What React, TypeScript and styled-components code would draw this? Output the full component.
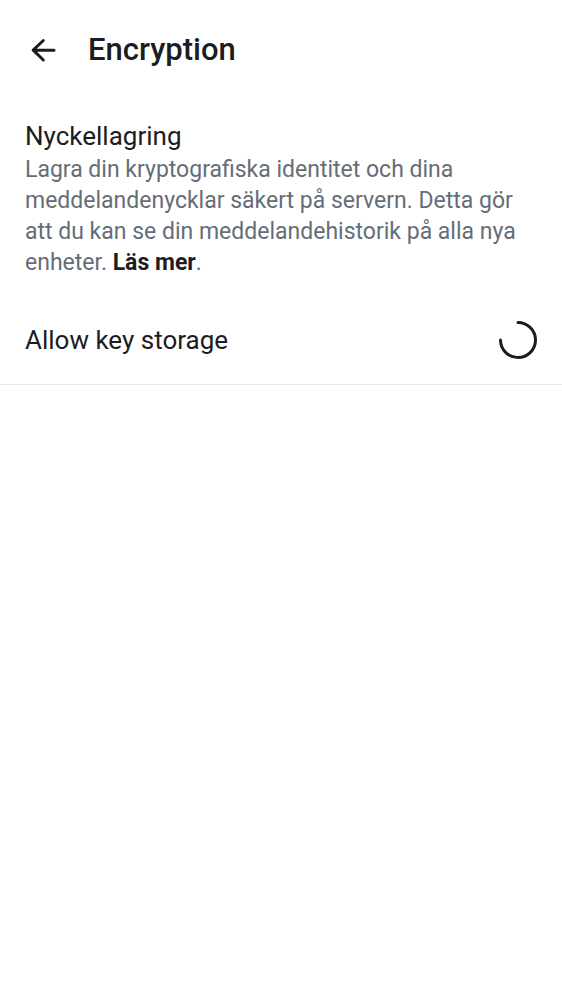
import React from "react";
import styled, { createGlobalStyle } from "styled-components";

const GlobalStyle = createGlobalStyle`
  * { box-sizing: border-box; }
  body { margin: 0; background: #fff; font-family: Roboto, "Noto Sans", sans-serif; color: #1b1d22; }
`;
const Header = styled.header`
  display: flex;
  align-items: center;
  gap: 26px;
  padding: 30px 25px;
`;
const BackButton = styled.button`
  display: flex;
  padding: 0;
  border: 0;
  background: none;
  color: inherit;
  cursor: pointer;
`;
const Title = styled.h1`
  margin: 0;
  font-size: 31px;
  line-height: 40px;
  font-weight: 500;
`;
const Section = styled.section`
  padding: 19px 25px 20px;
`;
const SectionTitle = styled.h2`
  margin: 0;
  font-size: 26px;
  line-height: 34px;
  font-weight: 400;
`;
const Description = styled.p`
  margin: 0;
  padding-top: 1px;
  font-size: 23px;
  line-height: 31px;
  color: #656d77;
`;
const Link = styled.a`
  font-weight: 700;
  color: #1b1d22;
  text-decoration: none;
`;
const Row = styled.div`
  display: flex;
  align-items: center;
  justify-content: space-between;
  padding: 23px 25px 25px;
  border-bottom: 1px solid #e6e8ee;
`;
const RowLabel = styled.span`
  font-size: 26px;
  line-height: 34px;
`;

export default function App() {
  return (
    <>
      <GlobalStyle />
      <Header>
        <BackButton type="button" aria-label="Tillbaka">
          <svg width="37" height="37" viewBox="0 0 37 37" fill="none" stroke="currentColor" strokeWidth="3" strokeLinecap="round" strokeLinejoin="round">
            <path d="M18.3 8.5L8.2 18.2L18.3 28M8.2 18.2H29" />
          </svg>
        </BackButton>
        <Title>Encryption</Title>
      </Header>
      <main>
        <Section>
          <SectionTitle>Nyckellagring</SectionTitle>
          <Description>
            Lagra din kryptografiska identitet och dina meddelandenycklar säkert på servern. Detta gör att du kan se din meddelandehistorik på alla nya enheter. <Link href="#">Läs mer</Link>.
          </Description>
        </Section>
        <Row>
          <RowLabel>Allow key storage</RowLabel>
          <svg width="38" height="38" viewBox="0 0 38 38" fill="none" stroke="currentColor" strokeWidth="3" strokeLinecap="round" role="progressbar" aria-label="Allow key storage">
            <path d="M19 1.5A17.5 17.5 0 1 1 1.5 19" />
          </svg>
        </Row>
      </main>
    </>
  );
}
